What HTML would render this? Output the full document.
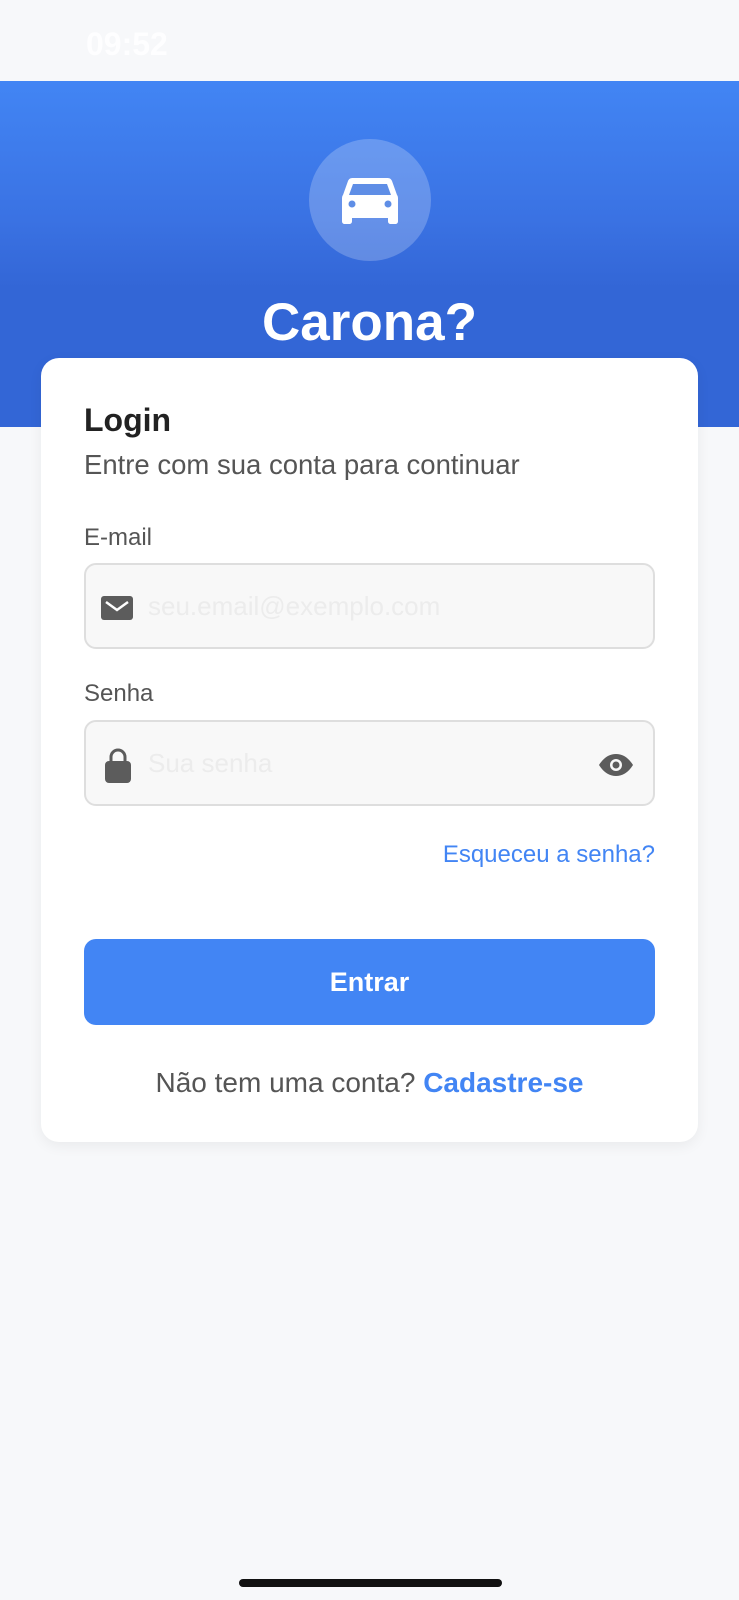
<!DOCTYPE html>
<html><head><meta charset="utf-8"><style>
*{margin:0;padding:0;box-sizing:border-box}
body{width:739px;height:1600px;background:#f7f8fa;font-family:"Liberation Sans",sans-serif;position:relative;overflow:hidden}
.hdr{position:absolute;left:0;top:81px;width:739px;height:346px;background:linear-gradient(#4285f4 0%,#3a72e3 40%,#3366d6 60%,#3366d6 100%)}
.circle{position:absolute;left:309px;top:139px;width:122px;height:122px;border-radius:50%;background:rgba(255,255,255,0.22)}
.title{position:absolute;left:0;width:739px;top:292px;text-align:center;color:#fff;font-weight:bold;font-size:53px}
.card{position:absolute;left:41px;top:358px;width:657px;height:784px;background:#fff;border-radius:18px;box-shadow:0 4px 14px rgba(0,0,0,0.06)}
.abs{position:absolute}
.inp{position:absolute;left:84px;width:571px;height:86px;border:2px solid #dedede;border-radius:12px;background:#f8f8f8}
.ph{position:absolute;left:62px;top:26px;font-size:26px;color:#ececec}
</style></head><body>
<div class="abs" style="left:86px;top:26px;font-size:32px;font-weight:bold;color:rgba(255,255,255,0.85)">09:52</div>
<div class="hdr"></div>
<div class="circle"></div>
<svg class="abs" style="left:341px;top:176px" width="58" height="48" viewBox="0 0 58 48"><path d="M12 2h34c3 0 4 1 5 3l5 14c1 1 1 3 1 4v22c0 2-1 3-3 3h-4c-2 0-3-1-3-3v-3H11v3c0 2-1 3-3 3H4c-2 0-3-1-3-3V23c0-1 0-3 1-4L7 5c1-2 2-3 5-3z" fill="#fff"/><path d="M12 8h34l4 11H8z" fill="#5f8ee6"/><circle cx="11" cy="28" r="3.5" fill="#5f8ee6"/><circle cx="47" cy="28" r="3.5" fill="#5f8ee6"/></svg>
<div class="title">Carona?</div>
<div class="card"></div>
<div class="abs" style="left:84px;top:402px;font-size:32px;font-weight:bold;color:#222">Login</div>
<div class="abs" style="left:84px;top:449px;font-size:27.5px;color:#555">Entre com sua conta para continuar</div>
<div class="abs" style="left:84px;top:524px;font-size:24px;color:#555">E-mail</div>
<div class="inp" style="top:563px"><svg class="abs" style="left:15px;top:31px" width="32" height="24" viewBox="0 0 32 24"><rect width="32" height="24" rx="3" fill="#5c5c5c"/><path d="M5 6l11 8 11-8" stroke="#fff" stroke-width="2.5" fill="none"/></svg><div class="ph">seu.email@exemplo.com</div></div>
<div class="abs" style="left:84px;top:680px;font-size:24px;color:#555">Senha</div>
<div class="inp" style="top:720px"><svg class="abs" style="left:18px;top:25px" width="28" height="36" viewBox="0 0 28 36"><path d="M7 15V10a7 7 0 0 1 14 0v5" stroke="#5c5c5c" stroke-width="3" fill="none"/><rect x="1" y="14" width="26" height="22" rx="4" fill="#5c5c5c"/></svg><div class="ph">Sua senha</div><svg class="abs" style="left:512px;top:32px" width="36" height="22" viewBox="0 0 36 22"><path d="M1 11C6 3 12 0 18 0s12 3 17 11c-5 8-11 11-17 11S6 19 1 11z" fill="#5c5c5c"/><circle cx="18" cy="11" r="6" fill="#f8f8f8"/><circle cx="18" cy="11" r="3.5" fill="#5c5c5c"/></svg></div>
<div class="abs" style="right:84px;top:841px;font-size:24px;color:#4285f4">Esqueceu a senha?</div>
<div class="abs" style="left:84px;top:939px;width:571px;height:86px;border-radius:12px;background:#4285f4;color:#fff;font-weight:bold;font-size:27px;text-align:center;line-height:86px">Entrar</div>
<div class="abs" style="left:0;width:739px;top:1067px;text-align:center;font-size:28px;color:#555">Não tem uma conta? <b style="color:#4285f4">Cadastre-se</b></div>
<div class="abs" style="left:239px;top:1579px;width:263px;height:8px;border-radius:4px;background:#111"></div>
</body></html>
